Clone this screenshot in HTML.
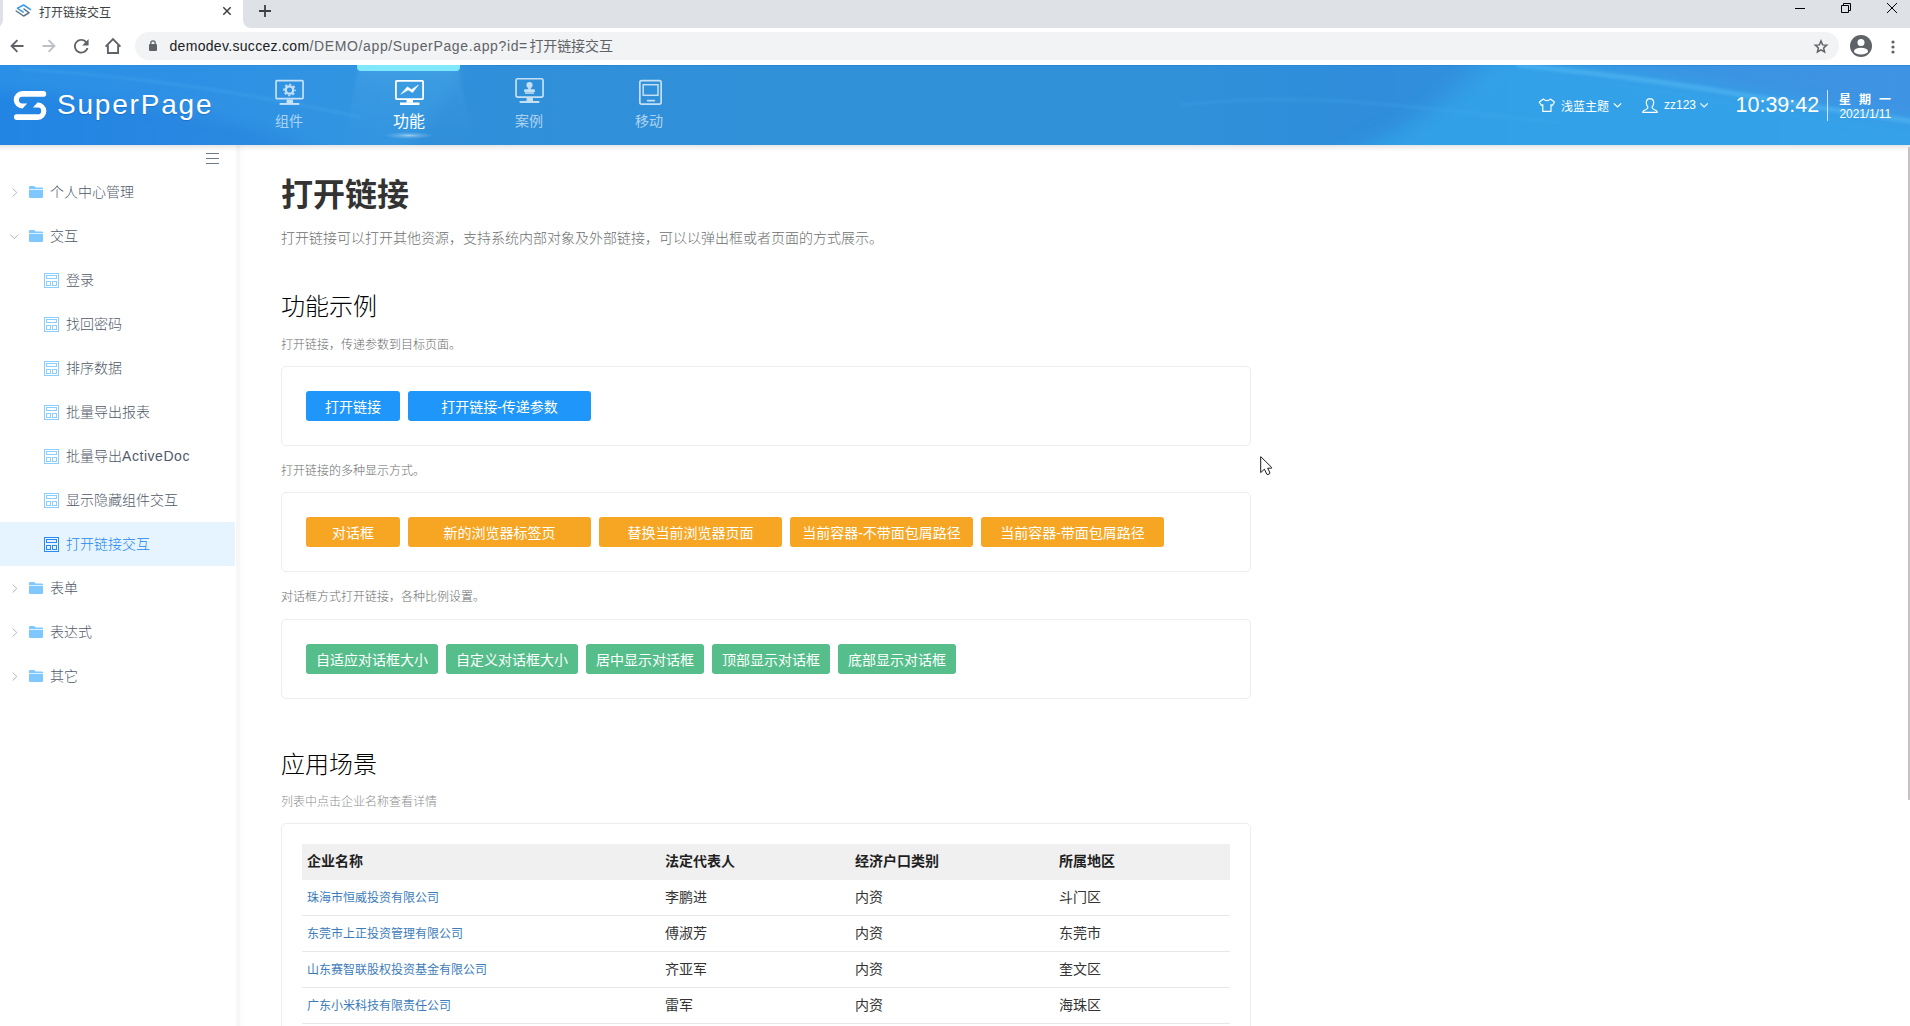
<!DOCTYPE html>
<html lang="zh-CN">
<head>
<meta charset="utf-8">
<title>打开链接交互</title>
<style>
*{box-sizing:border-box;margin:0;padding:0}
html,body{width:1910px;height:1026px;overflow:hidden;background:#fff}
body{position:relative;font-family:"Liberation Sans","Noto Sans CJK SC",sans-serif;color:#333;font-size:14px;-webkit-font-smoothing:antialiased}
.abs{position:absolute}
svg{display:block;overflow:visible}
/* ---------- browser chrome ---------- */
#tabstrip{position:absolute;left:0;top:0;width:1910px;height:28px;background:#dee1e6}
#tab{position:absolute;left:3px;top:0;width:240px;height:28px;background:#fff;border-radius:0}
#tabL{position:absolute;left:-5px;top:20px;width:8px;height:8px;background:#fff}
#tabL i{position:absolute;left:0;top:0;width:8px;height:8px;background:#dee1e6;border-bottom-right-radius:8px}
#tabR{position:absolute;left:243px;top:20px;width:8px;height:8px;background:#fff}
#tabR i{position:absolute;left:0;top:0;width:8px;height:8px;background:#dee1e6;border-bottom-left-radius:8px}
#tabtitle{position:absolute;left:39px;top:4.5px;font-size:12px;line-height:17px;color:#3c4043;letter-spacing:0}
#toolbar{position:absolute;left:0;top:28px;width:1910px;height:37px;background:#fff}
#omni{position:absolute;left:135px;top:4px;width:1704px;height:28px;border-radius:14px;background:#f1f3f4}
#url{position:absolute;left:34.5px;top:4px;font-size:14px;line-height:20px;color:#202124;white-space:nowrap;letter-spacing:.31px}
#url span{color:#5f6368}#u2{letter-spacing:.64px}#u3{letter-spacing:-.1px;margin-left:1.5px}#url b{font-weight:normal}
/* ---------- app header ---------- */
#hdr{position:absolute;left:0;top:65px;width:1910px;height:80px;overflow:hidden;
 background:linear-gradient(90deg,#2285e4 0%,#2887e1 10%,#308fda 22%,#3090d8 40%,#3090d8 62%,#2f8ddb 72%,#3a94e2 86%,#3f93e3 100%)}
#logoTxt{position:absolute;left:57px;top:23.6px;font-size:28px;line-height:32px;color:#fff;letter-spacing:1.8px;text-shadow:0 1px 1px rgba(0,30,90,.22);white-space:nowrap}
.nav{position:absolute;top:0;width:120px;height:80px;text-align:center;color:rgba(255,255,255,.62);font-size:14px}
.nav .lb{position:absolute;left:0;width:120px;top:46px;line-height:20px}
.nav.on{color:#fff;font-size:16px}
.nav.on .lb{top:45.5px;line-height:22px}
.hr{position:absolute;color:#fff;font-size:12px;line-height:16px;white-space:nowrap}
/* ---------- sidebar ---------- */
#side{position:absolute;left:0;top:145px;width:235px;height:881px;background:#fff}
#gut{position:absolute;left:236px;top:145px;width:8px;height:881px;background:linear-gradient(90deg,#f7f7f7 0,#f7f7f7 4px,#fcfcfc 4px,#fdfdfd 8px);z-index:2}
.row{position:absolute;left:0;width:235px;height:44px;line-height:44px;font-size:14px;color:#515968;white-space:nowrap;font-weight:300}
.row.sel{background:#e6f4ff;color:#1b86f2}
.row .t{position:absolute;left:50px;top:0}
.row.c .t{left:66px}
.row svg{position:absolute}
/* ---------- content ---------- */
#main{position:absolute;left:240px;top:145px;width:1670px;height:881px;background:#fff}
.tx{position:absolute;left:41px;white-space:nowrap}
.h1{top:30px;font-size:32px;line-height:40px;font-weight:bold;color:#333}
.h2{font-size:24px;line-height:32px;color:#000;font-weight:300}
.p14{font-size:14px;line-height:20px;color:#6e6e6e;font-weight:300}
.p12{font-size:12px;line-height:18px;color:#6c6c6c;font-weight:300}
.card{position:absolute;left:41px;width:970px;height:80px;border:1px solid #ecedef;border-radius:5px;background:#fff}
.btn{position:absolute;top:24px;height:30px;line-height:32px;border-radius:3px;color:#fff;font-size:14px;text-align:center;white-space:nowrap}
.b{background:#1e96fa}.o{background:#f7a623}.g{background:#55be8b}
table{position:absolute;left:20px;top:20px;width:928px;border-collapse:separate;border-spacing:0;table-layout:fixed}
th{height:36px;background:#f0f0f0;text-align:left;padding:0 0 4px 5px;font-size:14px;font-weight:bold;color:#1f1f1f}
td{height:36px;border-bottom:1px solid #e8e8e8;padding:0 0 3px 5px;font-size:14px;color:#333}
td.lk{font-size:12px;color:#3d7cb9;padding-bottom:3px}
</style>
</head>
<body>
<!-- ================= browser chrome ================= -->
<div id="tabstrip">
  <div id="tab"></div><div id="tabL"><i></i></div><div id="tabR"><i></i></div>
  <svg class="abs" style="left:14.5px;top:4.4px" width="18" height="14" viewBox="0 0 18 14">
    <path d="M2.6 4.2 L8.6 1 L15.6 5.6" fill="none" stroke="#3a9be8" stroke-width="1.5" stroke-linecap="round" stroke-linejoin="round"/>
    <path d="M2.6 4.4 L8.2 8.2" fill="none" stroke="#3a9be8" stroke-width="1.5" stroke-linecap="round"/>
    <path d="M1.2 7 L8.6 12 L14 8.8 L9 5" fill="none" stroke="#5e7185" stroke-width="1.5" stroke-linecap="round" stroke-linejoin="round"/>
  </svg>
  <div id="tabtitle">打开链接交互</div>
  <svg class="abs" style="left:222px;top:6px" width="10" height="10" viewBox="0 0 10 10"><path d="M1.3 1.3 L8.7 8.7 M8.7 1.3 L1.3 8.7" stroke="#3c4043" stroke-width="1.5" fill="none"/></svg>
  <svg class="abs" style="left:259px;top:5px" width="12" height="12" viewBox="0 0 12 12"><path d="M6 0 V12 M0 6 H12" stroke="#3c4043" stroke-width="1.8" fill="none"/></svg>
  <!-- window controls -->
  <svg class="abs" style="left:1795px;top:8px" width="10" height="1"><rect width="10" height="1" fill="#000"/></svg>
  <svg class="abs" style="left:1841px;top:3px" width="10" height="10" viewBox="0 0 10 10"><path d="M0.5 2.5 H7.5 V9.5 H0.5 Z" fill="none" stroke="#000" stroke-width="1"/><path d="M2.5 2.5 V0.5 H9.5 V7.5 H7.5" fill="none" stroke="#000" stroke-width="1"/></svg>
  <svg class="abs" style="left:1887px;top:3px" width="10" height="10" viewBox="0 0 10 10"><path d="M0 0 L10 10 M10 0 L0 10" stroke="#000" stroke-width="1" fill="none"/></svg>
</div>
<div id="toolbar">
  <!-- back -->
  <svg class="abs" style="left:10px;top:11px" width="14" height="14" viewBox="0 0 14 14"><path d="M13.5 7 H2 M7.4 1.2 L1.6 7 L7.4 12.8" fill="none" stroke="#5f6368" stroke-width="1.9"/></svg>
  <!-- forward (disabled) -->
  <svg class="abs" style="left:42px;top:11px" width="14" height="14" viewBox="0 0 14 14"><path d="M0.5 7 H12 M6.6 1.2 L12.4 7 L6.6 12.8" fill="none" stroke="#bdc1c6" stroke-width="1.9"/></svg>
  <!-- reload -->
  <svg class="abs" style="left:73.6px;top:10.8px" width="14.6" height="14.6" viewBox="4 4 16 16"><path fill="#5f6368" d="M17.65 6.35C16.2 4.9 14.21 4 12 4c-4.42 0-7.99 3.58-7.99 8s3.57 8 7.99 8c3.73 0 6.84-2.55 7.73-6h-2.08c-.82 2.33-3.04 4-5.65 4-3.31 0-6-2.69-6-6s2.69-6 6-6c1.66 0 3.14.69 4.22 1.78L13 11h7V4l-2.35 2.35z"/></svg>
  <!-- home -->
  <svg class="abs" style="left:104px;top:9px" width="18" height="18" viewBox="0 0 18 18"><path d="M1.6 9.6 L9 2.2 L16.4 9.6 M3.9 8.2 V16 H14.1 V8.2" fill="none" stroke="#5f6368" stroke-width="1.9" stroke-linejoin="miter"/></svg>
  <div id="omni">
    <!-- lock -->
    <svg class="abs" style="left:14px;top:8px" width="8" height="11" viewBox="0 0 8 11"><rect x="0" y="4" width="8" height="7" rx="1" fill="#5f6368"/><path d="M1.8 4.4 V3 a2.2 2.2 0 0 1 4.4 0 V4.4" fill="none" stroke="#5f6368" stroke-width="1.3"/></svg>
    <div id="url"><b id="u1">demodev.succez.com</b><span id="u2">/DEMO/app/SuperPage.app?id=</span><span id="u3">打开链接交互</span></div>
    <!-- star -->
    <svg class="abs" style="left:1678px;top:7px" width="16" height="15" viewBox="0 0 24 24"><path fill="none" stroke="#5f6368" stroke-width="2.4" stroke-linejoin="miter" d="M12 3.2 L14.6 9.4 L21.2 9.9 L16.2 14.3 L17.7 20.8 L12 17.3 L6.3 20.8 L7.8 14.3 L2.8 9.9 L9.4 9.4 Z"/></svg>
  </div>
  <!-- account -->
  <svg class="abs" style="left:1850px;top:7px" width="22" height="22" viewBox="0 0 22 22"><circle cx="11" cy="11" r="11" fill="#5f6368"/><circle cx="11" cy="7.6" r="3.5" fill="#fff"/><ellipse cx="11" cy="16.2" rx="7" ry="3.4" fill="#fff"/></svg>
  <!-- menu -->
  <svg class="abs" style="left:1891.4px;top:11.5px" width="4" height="14" viewBox="0 0 4 14"><circle cx="2" cy="2" r="1.6" fill="#5f6368"/><circle cx="2" cy="7" r="1.6" fill="#5f6368"/><circle cx="2" cy="12" r="1.6" fill="#5f6368"/></svg>
</div>

<!-- ================= app header ================= -->
<div id="hdr">
  <svg class="abs" style="left:0;top:0" width="1910" height="80" viewBox="0 0 1910 80">
    <defs>
      <filter id="bl8" x="-10%" y="-60%" width="120%" height="220%"><feGaussianBlur stdDeviation="7"/></filter>
      <filter id="bl16" x="-20%" y="-100%" width="140%" height="300%"><feGaussianBlur stdDeviation="16 8"/></filter>
      <filter id="bl2" x="-10%" y="-60%" width="120%" height="220%"><feGaussianBlur stdDeviation="1.6"/></filter>
      <linearGradient id="spot" x1="0" y1="0" x2="0" y2="1"><stop offset="0" stop-color="#9fe4ff" stop-opacity=".10"/><stop offset=".55" stop-color="#8fd8ff" stop-opacity=".035"/><stop offset="1" stop-color="#8fd8ff" stop-opacity="0"/></linearGradient>
    </defs>
    <rect x="0" y="0" width="1910" height="1" fill="#1f7fd6" opacity=".55"/>
    <!-- left light wave -->
    <path d="M-20 -12 L470 -12 L440 40 L400 92 L330 92 C280 62 130 30 -20 26 Z" fill="#3ba4ec" opacity=".34" filter="url(#bl8)"/>
    <path d="M20 4 C150 12 260 30 360 52" fill="none" stroke="#63c3f7" stroke-width="2.5" opacity=".2" filter="url(#bl2)"/>
    <!-- spotlight under active tab -->
    <path d="M359 0 H458 L474 80 H343 Z" fill="url(#spot)" filter="url(#bl2)"/>
    <!-- right light region + wave edge -->
    <path d="M1310 100 C1400 76 1460 30 1490 -14 L1517 -8 C1600 2 1700 18 1774 32 S1880 50 1940 58 L1940 110 L1310 110 Z" fill="#33a5ea" opacity=".8" filter="url(#bl16)"/>
    <path d="M1517 0 C1600 8 1700 22 1774 35 S1880 51 1915 57" fill="none" stroke="#62c6f8" stroke-width="5" opacity=".4" filter="url(#bl2)"/>
    <path d="M1180 40 C1300 26 1400 40 1560 58" fill="none" stroke="#4cb2f0" stroke-width="3" opacity=".22" filter="url(#bl2)"/>
  </svg>
  <!-- logo -->
  <svg class="abs" style="left:0;top:0" width="60" height="80" viewBox="0 0 60 80">
    <path id="lgp" fill="#fff" d="M22.3 26.1 H43.4 a2.8 2.8 0 0 1 0 5.6 H22.3 a3.4 3.4 0 0 0 0 6.8 H27.2 L22.6 43.5 A8.7 8.7 0 0 1 22.3 26.1 Z"/>
    <path fill="#fff" transform="rotate(180 30.05 40.5)" d="M22.3 26.1 H43.4 a2.8 2.8 0 0 1 0 5.6 H22.3 a3.4 3.4 0 0 0 0 6.8 H27.2 L22.6 43.5 A8.7 8.7 0 0 1 22.3 26.1 Z"/>
  </svg>
  <div id="logoTxt">SuperPage</div>
  <div class="abs" style="left:357px;top:0;width:103px;height:6px;background:#80e8fb;border-radius:0 0 4px 4px"></div>
  <div class="abs" style="left:384px;top:67px;width:50px;height:7px;background:radial-gradient(ellipse at center,rgba(255,255,255,.5) 0%,rgba(255,255,255,.18) 35%,rgba(255,255,255,0) 70%)"></div>
  <svg class="abs" style="left:0;top:0" width="1910" height="80" viewBox="0 0 1910 80">
    <!-- 组件 -->
    <g opacity=".72" fill="none" stroke="#fff">
      <rect x="276.05" y="15.65" width="27" height="18" rx=".8" stroke-width="1.7"/>
      <rect x="286.6" y="34.5" width="6.4" height="3.6" fill="#fff" stroke="none"/>
      <rect x="279.6" y="38" width="19.7" height="1.9" fill="#fff" stroke="none"/>
      <circle cx="289.5" cy="25" r="3.7" stroke-width="2.3"/>
      <circle cx="289.5" cy="25" r="5.5" stroke-width="1.7" stroke-dasharray="2.16 2.16" stroke-dashoffset="1.08"/>
    </g>
    <!-- 功能 -->
    <g fill="none" stroke="#fff">
      <rect x="395.9" y="15.9" width="27.2" height="18.2" rx=".8" stroke-width="1.8"/>
      <rect x="406.5" y="35" width="6.5" height="2.7" fill="#fff" stroke="none"/>
      <rect x="400" y="37.5" width="19.5" height="2.5" fill="#fff" stroke="none"/>
      <path d="M400.8 29.2 L407.4 21.8 L411.4 24.6 L418.4 20 L412.6 27.6 L408.2 24.9 Z" fill="#fff" stroke="#fff" stroke-width=".5" stroke-linejoin="round"/>
    </g>
    <!-- 案例 -->
    <g opacity=".72" fill="none" stroke="#fff">
      <rect x="516.05" y="13.75" width="27" height="18.3" rx="1.8" stroke-width="1.7"/>
      <rect x="526.6" y="32.9" width="6.4" height="3.2" fill="#fff" stroke="none"/>
      <rect x="519.6" y="36" width="19.7" height="2" fill="#fff" stroke="none"/>
      <circle cx="529.5" cy="20" r="3.1" fill="#fff" stroke="none"/>
      <rect x="528.2" y="22" width="2.6" height="3" fill="#fff" stroke="none"/>
      <rect x="524" y="24.3" width="11" height="3.2" rx="1.4" fill="#fff" stroke="none"/>
      <rect x="525" y="27.6" width="9" height="1.2" fill="#fff" stroke="none"/>
    </g>
    <!-- 移动 -->
    <g opacity=".72" fill="none" stroke="#fff">
      <rect x="639.85" y="15.65" width="21.3" height="23.4" rx="1.8" stroke-width="1.7"/>
      <rect x="643.2" y="19.7" width="14.8" height="10.6" stroke-width="1.5"/>
      <path d="M647.6 35.6 H654.4" stroke-width="1.7" stroke-linecap="round"/>
    </g>
    <!-- header right icons -->
    <g fill="none" stroke="#fff" stroke-width="1.2" stroke-linejoin="round">
      <path d="M1543.4 34.1 L1539.4 37.1 L1541.4 40.5 L1542.8 39.7 V46.4 H1551 V39.7 L1552.4 40.5 L1554.4 37.1 L1550.4 34.1 Q1546.9 37.2 1543.4 34.1 Z"/>
      <path d="M1613.8 38.3 L1617.5 42 L1621.2 38.3" stroke-linejoin="miter"/>
      <path d="M1700.4 38.3 L1704.1 42 L1707.8 38.3" stroke-linejoin="miter"/>
      <path d="M1650 33.6 c-2.4 0 -3.7 1.8 -3.7 4.2 c0 1.8 .7 3.2 1.6 4.2 c.3 1.2 -.5 1.9 -1.9 2.5 c-2 .8 -3.3 1.4 -3.3 2.8 h14.6 c0 -1.4 -1.3 -2 -3.3 -2.8 c-1.4 -.6 -2.2 -1.3 -1.9 -2.5 c.9 -1 1.6 -2.4 1.6 -4.2 c0 -2.4 -1.3 -4.2 -3.7 -4.2 Z"/>
    </g>
    <rect x="1827" y="25" width="1" height="31" fill="#fff" opacity=".75"/>
  </svg>
  <div class="nav" style="left:229px"><div class="lb">组件</div></div>
  <div class="nav on" style="left:349px"><div class="lb">功能</div></div>
  <div class="nav" style="left:469px"><div class="lb">案例</div></div>
  <div class="nav" style="left:589px"><div class="lb">移动</div></div>
  <div class="hr" style="left:1561px;top:33.5px">浅蓝主题</div>
  <div class="hr" style="left:1664px;top:32px">zz123</div>
  <div class="hr" style="left:1735.5px;top:26.5px;font-size:21.5px;line-height:26px;letter-spacing:0">10:39:42</div>
  <div class="hr" style="left:1839px;top:27px;font-weight:bold;letter-spacing:8px">星期一</div>
  <div class="hr" style="left:1839.5px;top:41px;letter-spacing:-.1px">2021/1/11</div>
</div>
<div class="abs" style="left:0;top:145px;width:1910px;height:7px;background:linear-gradient(180deg,rgba(0,0,0,.10),rgba(0,0,0,.03) 55%,rgba(0,0,0,0));z-index:5"></div>

<!-- ================= sidebar ================= -->
<div id="side">
  <svg class="abs" style="left:206px;top:8px" width="13" height="11" viewBox="0 0 13 11"><path d="M0 .5 H13 M0 5.5 H13 M0 10.5 H13" stroke="#6f7a8a" stroke-width="1"/></svg>
  <div class="row" style="top:25px"><svg style="left:12px;top:18px" width="6" height="9" viewBox="0 0 6 9"><path d="M.6 .5 L4.8 4.5 L.6 8.5" fill="none" stroke="#b4b4b4" stroke-width="1"/></svg><svg style="left:29px;top:16px" width="14" height="12" viewBox="0 0 14 12"><path d="M1.2 0 H5.2 L6.6 1.4 H12.8 Q14 1.4 14 2.6 V2.9 H0 V1.2 Q0 0 1.2 0 Z M0 3.7 H14 V10.8 Q14 12 12.8 12 H1.2 Q0 12 0 10.8 Z" fill="#7ec8ff"/></svg><span class="t">个人中心管理</span></div>
  <div class="row" style="top:69px"><svg style="left:10px;top:20px" width="9" height="6" viewBox="0 0 9 6"><path d="M.3 .6 L4.3 4.6 L8.3 .6" fill="none" stroke="#b4b4b4" stroke-width="1"/></svg><svg style="left:29px;top:16px" width="14" height="12" viewBox="0 0 14 12"><path d="M1.2 0 H5.2 L6.6 1.4 H12.8 Q14 1.4 14 2.6 V2.9 H0 V1.2 Q0 0 1.2 0 Z M0 3.7 H14 V10.8 Q14 12 12.8 12 H1.2 Q0 12 0 10.8 Z" fill="#7ec8ff"/></svg><span class="t">交互</span></div>
  <div class="row c" style="top:113px"><svg style="left:44px;top:15px" width="15" height="15" viewBox="0 0 15 15"><g fill="none" stroke="#8ccfff" stroke-width="1"><rect x=".5" y=".5" width="14" height="14"/><rect x="2.5" y="2.5" width="10" height="3"/><rect x="2.5" y="8.5" width="4" height="4"/><rect x="8.5" y="8.5" width="4" height="4"/></g></svg><span class="t">登录</span></div>
  <div class="row c" style="top:157px"><svg style="left:44px;top:15px" width="15" height="15" viewBox="0 0 15 15"><g fill="none" stroke="#8ccfff" stroke-width="1"><rect x=".5" y=".5" width="14" height="14"/><rect x="2.5" y="2.5" width="10" height="3"/><rect x="2.5" y="8.5" width="4" height="4"/><rect x="8.5" y="8.5" width="4" height="4"/></g></svg><span class="t">找回密码</span></div>
  <div class="row c" style="top:201px"><svg style="left:44px;top:15px" width="15" height="15" viewBox="0 0 15 15"><g fill="none" stroke="#8ccfff" stroke-width="1"><rect x=".5" y=".5" width="14" height="14"/><rect x="2.5" y="2.5" width="10" height="3"/><rect x="2.5" y="8.5" width="4" height="4"/><rect x="8.5" y="8.5" width="4" height="4"/></g></svg><span class="t">排序数据</span></div>
  <div class="row c" style="top:245px"><svg style="left:44px;top:15px" width="15" height="15" viewBox="0 0 15 15"><g fill="none" stroke="#8ccfff" stroke-width="1"><rect x=".5" y=".5" width="14" height="14"/><rect x="2.5" y="2.5" width="10" height="3"/><rect x="2.5" y="8.5" width="4" height="4"/><rect x="8.5" y="8.5" width="4" height="4"/></g></svg><span class="t">批量导出报表</span></div>
  <div class="row c" style="top:289px"><svg style="left:44px;top:15px" width="15" height="15" viewBox="0 0 15 15"><g fill="none" stroke="#8ccfff" stroke-width="1"><rect x=".5" y=".5" width="14" height="14"/><rect x="2.5" y="2.5" width="10" height="3"/><rect x="2.5" y="8.5" width="4" height="4"/><rect x="8.5" y="8.5" width="4" height="4"/></g></svg><span class="t">批量导出<span style="letter-spacing:.55px">ActiveDoc</span></span></div>
  <div class="row c" style="top:333px"><svg style="left:44px;top:15px" width="15" height="15" viewBox="0 0 15 15"><g fill="none" stroke="#8ccfff" stroke-width="1"><rect x=".5" y=".5" width="14" height="14"/><rect x="2.5" y="2.5" width="10" height="3"/><rect x="2.5" y="8.5" width="4" height="4"/><rect x="8.5" y="8.5" width="4" height="4"/></g></svg><span class="t">显示隐藏组件交互</span></div>
  <div class="row c sel" style="top:377px"><svg style="left:44px;top:15px" width="15" height="15" viewBox="0 0 15 15"><g fill="none" stroke="#2a8cf0" stroke-width="1"><rect x=".5" y=".5" width="14" height="14"/><rect x="2.5" y="2.5" width="10" height="3"/><rect x="2.5" y="8.5" width="4" height="4"/><rect x="8.5" y="8.5" width="4" height="4"/></g></svg><span class="t">打开链接交互</span></div>
  <div class="row" style="top:421px"><svg style="left:12px;top:18px" width="6" height="9" viewBox="0 0 6 9"><path d="M.6 .5 L4.8 4.5 L.6 8.5" fill="none" stroke="#b4b4b4" stroke-width="1"/></svg><svg style="left:29px;top:16px" width="14" height="12" viewBox="0 0 14 12"><path d="M1.2 0 H5.2 L6.6 1.4 H12.8 Q14 1.4 14 2.6 V2.9 H0 V1.2 Q0 0 1.2 0 Z M0 3.7 H14 V10.8 Q14 12 12.8 12 H1.2 Q0 12 0 10.8 Z" fill="#7ec8ff"/></svg><span class="t">表单</span></div>
  <div class="row" style="top:465px"><svg style="left:12px;top:18px" width="6" height="9" viewBox="0 0 6 9"><path d="M.6 .5 L4.8 4.5 L.6 8.5" fill="none" stroke="#b4b4b4" stroke-width="1"/></svg><svg style="left:29px;top:16px" width="14" height="12" viewBox="0 0 14 12"><path d="M1.2 0 H5.2 L6.6 1.4 H12.8 Q14 1.4 14 2.6 V2.9 H0 V1.2 Q0 0 1.2 0 Z M0 3.7 H14 V10.8 Q14 12 12.8 12 H1.2 Q0 12 0 10.8 Z" fill="#7ec8ff"/></svg><span class="t">表达式</span></div>
  <div class="row" style="top:509px"><svg style="left:12px;top:18px" width="6" height="9" viewBox="0 0 6 9"><path d="M.6 .5 L4.8 4.5 L.6 8.5" fill="none" stroke="#b4b4b4" stroke-width="1"/></svg><svg style="left:29px;top:16px" width="14" height="12" viewBox="0 0 14 12"><path d="M1.2 0 H5.2 L6.6 1.4 H12.8 Q14 1.4 14 2.6 V2.9 H0 V1.2 Q0 0 1.2 0 Z M0 3.7 H14 V10.8 Q14 12 12.8 12 H1.2 Q0 12 0 10.8 Z" fill="#7ec8ff"/></svg><span class="t">其它</span></div>
</div>
<div id="gut"></div>

<!-- ================= main content ================= -->
<div id="main">
  <div class="tx h1">打开链接</div>
  <div class="tx p14" style="top:83px">打开链接可以打开其他资源，支持系统内部对象及外部链接，可以以弹出框或者页面的方式展示。</div>
  <div class="tx h2" style="top:146px">功能示例</div>
  <div class="tx p12" style="top:190.5px">打开链接，传递参数到目标页面。</div>
  <div class="card" style="top:221px"><div class="btn b" style="left:24px;width:94px">打开链接</div><div class="btn b" style="left:126px;width:183px">打开链接-传递参数</div></div>
  <div class="tx p12" style="top:317px">打开链接的多种显示方式。</div>
  <div class="card" style="top:347px"><div class="btn o" style="left:24px;width:94px">对话框</div><div class="btn o" style="left:126px;width:183px">新的浏览器标签页</div><div class="btn o" style="left:317px;width:183px">替换当前浏览器页面</div><div class="btn o" style="left:508px;width:183px">当前容器-不带面包屑路径</div><div class="btn o" style="left:699px;width:183px">当前容器-带面包屑路径</div></div>
  <div class="tx p12" style="top:443px">对话框方式打开链接，各种比例设置。</div>
  <div class="card" style="top:474px"><div class="btn g" style="left:24px;width:132px">自适应对话框大小</div><div class="btn g" style="left:164px;width:132px">自定义对话框大小</div><div class="btn g" style="left:304px;width:118px">居中显示对话框</div><div class="btn g" style="left:430px;width:118px">顶部显示对话框</div><div class="btn g" style="left:556px;width:118px">底部显示对话框</div></div>
  <div class="tx h2" style="top:603.5px">应用场景</div>
  <div class="tx p12" style="top:647.5px;color:#8e8e8e">列表中点击企业名称查看详情</div>
  <div class="card" style="top:678px;height:260px">
    <table>
      <colgroup><col style="width:358px"><col style="width:190px"><col style="width:204px"><col style="width:176px"></colgroup>
      <tr><th>企业名称</th><th>法定代表人</th><th>经济户口类别</th><th>所属地区</th></tr>
      <tr><td class="lk">珠海市恒威投资有限公司</td><td>李鹏进</td><td>内资</td><td>斗门区</td></tr>
      <tr><td class="lk">东莞市上正投资管理有限公司</td><td>傅淑芳</td><td>内资</td><td>东莞市</td></tr>
      <tr><td class="lk">山东赛智联股权投资基金有限公司</td><td>齐亚军</td><td>内资</td><td>奎文区</td></tr>
      <tr><td class="lk">广东小米科技有限责任公司</td><td>雷军</td><td>内资</td><td>海珠区</td></tr>
      <tr><td class="lk">深圳市腾讯计算机系统有限公司</td><td>马化腾</td><td>内资</td><td>南山区</td></tr>
    </table>
  </div>
</div>
<!-- scrollbar thumb -->
<div class="abs" style="left:1908px;top:147px;width:2px;height:653px;background:#c4c2c2;border-radius:1px 0 0 1px;z-index:6"></div>
<!-- mouse cursor -->
<svg class="abs" style="left:1260px;top:456px;z-index:9" width="13" height="20" viewBox="0 0 13 20"><path d="M0.7 0.6 L0.7 16.6 L4.4 13.2 L6.8 18.2 Q8 19 9.4 18 Q10.2 17.2 9.6 16 L7.6 12.2 L11.6 12.2 L11.6 11.3 Z" fill="#fff" stroke="#1a1a24" stroke-width="1" stroke-linejoin="round"/></svg>
</body>
</html>
